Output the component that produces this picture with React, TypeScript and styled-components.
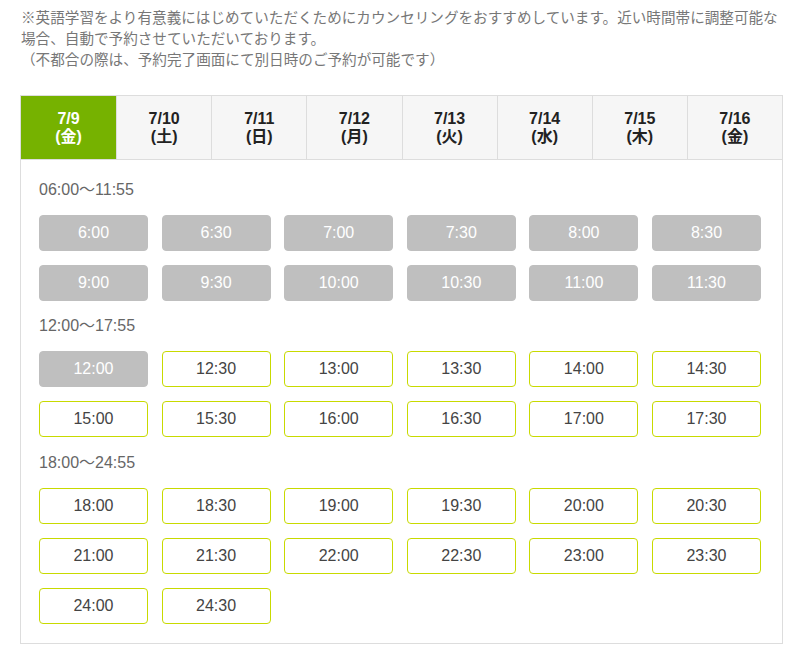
import React from 'react';
import styled, { createGlobalStyle } from 'styled-components';

const GlobalStyle = createGlobalStyle`
  body {
    margin: 0;
    background: #fff;
    font-family: "Liberation Sans", Arial, "Noto Sans CJK JP", sans-serif;
  }
`;

const Page = styled.div`
  width: 804px;
  padding: 8px 20px 20px;
  box-sizing: border-box;
`;

const Notice = styled.p`
  margin: 0 0 24px 1px;
  font-size: 14.6px;
  line-height: 21px;
  color: #777;
  white-space: nowrap;
`;

const Calendar = styled.section`
  width: 763px;
  border: 1px solid #ddd;
  box-sizing: border-box;
`;

const DayTabs = styled.div`
  display: grid;
  grid-template-columns: repeat(8, 1fr);
  border-bottom: 1px solid #ddd;
`;

const DayTab = styled.div<{ $active?: boolean }>`
  height: 63px;
  display: flex;
  flex-direction: column;
  align-items: center;
  justify-content: center;
  background: ${(p) => (p.$active ? '#76b200' : '#f6f6f6')};
  color: ${(p) => (p.$active ? '#fff' : '#222')};
  font-weight: 700;
  font-size: 16px;
  line-height: 18px;
  & + & {
    border-left: 1px solid #ddd;
  }
`;

const Body = styled.div`
  padding: 18px 21px 19px 18px;
`;

const Section = styled.div`
  & + & {
    margin-top: 13px;
  }
  &:last-child {
    margin-top: 14px;
  }
`;

const RangeLabel = styled.div`
  font-size: 16px;
  line-height: 24px;
  color: #666;
  margin-bottom: 13px;
`;

const SlotGrid = styled.div`
  display: grid;
  grid-template-columns: repeat(6, 1fr);
  column-gap: 13.6px;
  row-gap: 14px;
`;

const Slot = styled.button<{ $full?: boolean }>`
  height: 36px;
  box-sizing: border-box;
  border-radius: 4px;
  border: 1px solid ${(p) => (p.$full ? '#bfbfbf' : '#c8da00')};
  background: ${(p) => (p.$full ? '#bfbfbf' : '#fff')};
  color: ${(p) => (p.$full ? '#fff' : '#444')};
  font-family: "Liberation Sans", Arial, sans-serif;
  font-size: 16px;
  padding: 0;
  display: flex;
  align-items: center;
  justify-content: center;
`;

const days = [
  ['7/9', '金'],
  ['7/10', '土'],
  ['7/11', '日'],
  ['7/12', '月'],
  ['7/13', '火'],
  ['7/14', '水'],
  ['7/15', '木'],
  ['7/16', '金'],
];

const sections = [
  {
    label: '06:00〜11:55',
    slots: ['6:00', '6:30', '7:00', '7:30', '8:00', '8:30', '9:00', '9:30', '10:00', '10:30', '11:00', '11:30'],
  },
  {
    label: '12:00〜17:55',
    slots: ['12:00', '12:30', '13:00', '13:30', '14:00', '14:30', '15:00', '15:30', '16:00', '16:30', '17:00', '17:30'],
  },
  {
    label: '18:00〜24:55',
    slots: ['18:00', '18:30', '19:00', '19:30', '20:00', '20:30', '21:00', '21:30', '22:00', '22:30', '23:00', '23:30', '24:00', '24:30'],
  },
];

const fullSlots = ['6:00', '6:30', '7:00', '7:30', '8:00', '8:30', '9:00', '9:30', '10:00', '10:30', '11:00', '11:30', '12:00'];

function App() {
  return (
    <Page>
      <GlobalStyle />
      <Notice>
        ※英語学習をより有意義にはじめていただくためにカウンセリングをおすすめしています。近い時間帯に調整可能な
        <br />
        場合、自動で予約させていただいております。
        <br />
        （不都合の際は、予約完了画面にて別日時のご予約が可能です）
      </Notice>
      <Calendar>
        <DayTabs>
          {days.map(([date, wd], i) => (
            <DayTab key={date} $active={i === 0}>
              <span>{date}</span>
              <span>({wd})</span>
            </DayTab>
          ))}
        </DayTabs>
        <Body>
          {sections.map((s) => (
            <Section key={s.label}>
              <RangeLabel>{s.label}</RangeLabel>
              <SlotGrid>
                {s.slots.map((t) => (
                  <Slot key={t} $full={fullSlots.includes(t)}>
                    {t}
                  </Slot>
                ))}
              </SlotGrid>
            </Section>
          ))}
        </Body>
      </Calendar>
    </Page>
  );
}

export default App;
